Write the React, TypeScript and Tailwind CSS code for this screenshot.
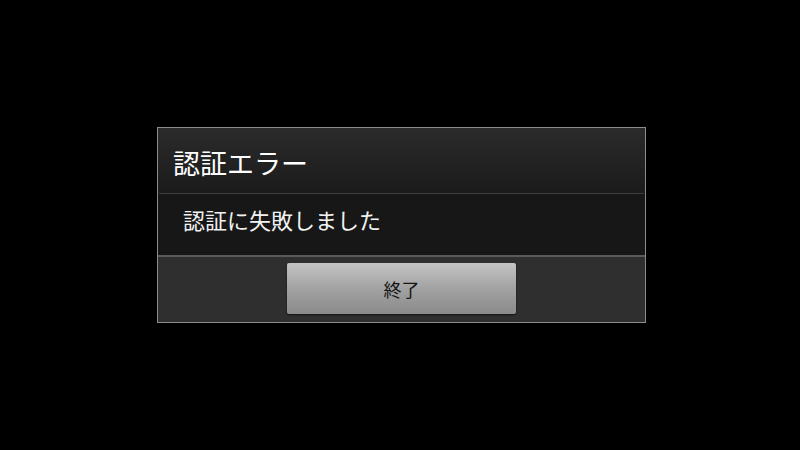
export default function App() {
  return (
    <div
      className="w-[800px] h-[450px] bg-black pt-[127px] pl-[157px]"
      style={{ fontFamily: '"Noto Sans CJK JP", "Noto Sans", sans-serif' }}
    >
      <div className="w-[489px] h-[196px] border border-[#8c8c8c] flex flex-col bg-[#171717]">
        {/* title */}
        <div className="h-[65px] shrink-0 flex items-center pl-[15px] pt-[3px] bg-gradient-to-b from-[#2b2b2b] to-[#1b1b1b]">
          <span className="text-[27px] leading-none text-white">認証エラー</span>
        </div>
        <div className="h-px mx-[1px] bg-[#3e3e3e] shrink-0" />
        {/* message */}
        <div className="h-[61px] shrink-0 flex items-center pl-[25px] pb-[12px] bg-[#171717]">
          <span className="text-[22px] leading-none text-[#f2f2f2]">認証に失敗しました</span>
        </div>
        {/* buttons */}
        <div className="flex-1 border-t-2 border-[#5a5a5a] bg-[#2f2f2f] flex items-start justify-center pt-[6px]">
          <button className="w-[229px] h-[51px] rounded-[2px] bg-gradient-to-b from-[#c4c4c4] via-[#a2a2a2] to-[#8a8a8a] shadow-[0_1px_2px_rgba(0,0,0,0.6)] flex items-center justify-center">
            <span className="text-[18px] leading-none text-[#161616]">終了</span>
          </button>
        </div>
      </div>
    </div>
  );
}
